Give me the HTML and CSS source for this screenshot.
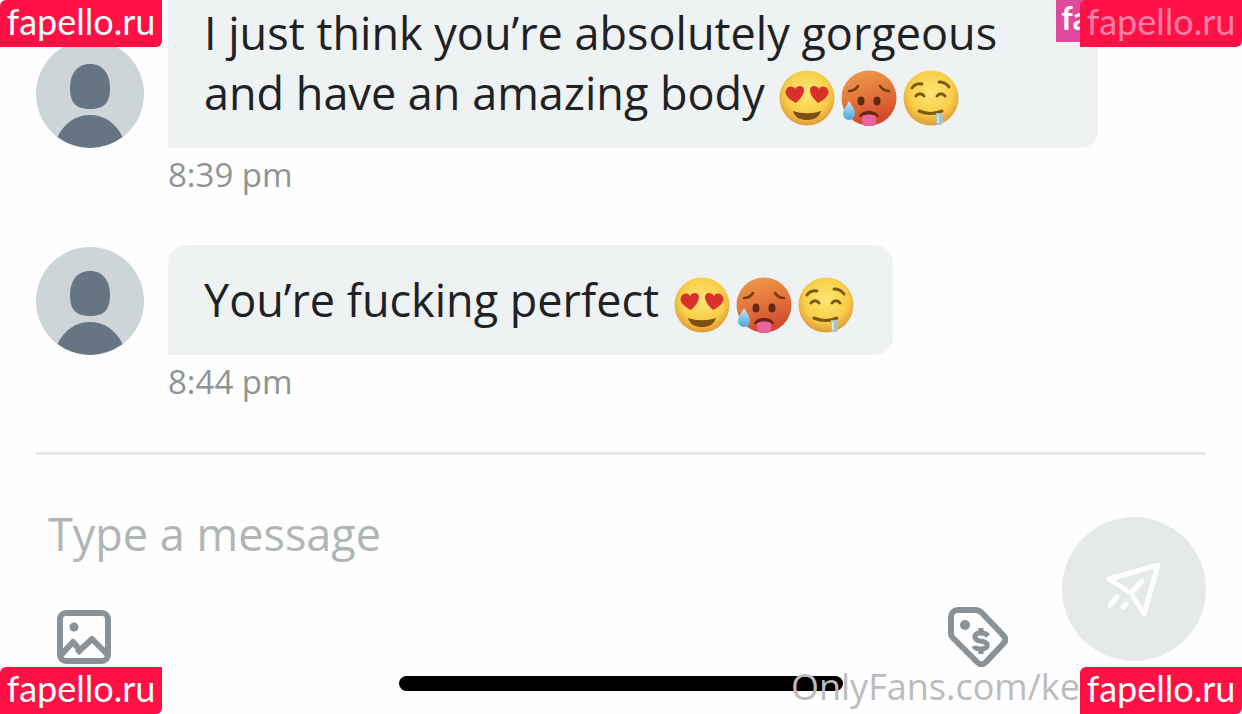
FILE: index.html
```html
<!DOCTYPE html>
<html lang="en">
<head>
  <meta charset="utf-8">
  <meta name="viewport" content="width=device-width, initial-scale=1">
  <title>Messages</title>
  <link rel="stylesheet" href="styles.css">
</head>
<body>

  <!-- Shared shapes -->
  <svg class="sprite" aria-hidden="true">
    <defs>
      <radialGradient id="yellow" cx="50%" cy="40%" r="60%">
        <stop offset="0" stop-color="#fde672"/>
        <stop offset=".65" stop-color="#f9cf4a"/>
        <stop offset="1" stop-color="#e09a35"/>
      </radialGradient>
      <linearGradient id="hot" x1="0" y1="0" x2=".3" y2="1">
        <stop offset="0" stop-color="#f0a04a"/>
        <stop offset=".5" stop-color="#e5793c"/>
        <stop offset="1" stop-color="#d24a2c"/>
      </linearGradient>
      <linearGradient id="drop" x1="0" y1="0" x2="0" y2="1">
        <stop offset="0" stop-color="#c4e8f8"/>
        <stop offset="1" stop-color="#4fa3da"/>
      </linearGradient>
    </defs>
    <symbol id="avatar" viewBox="0 0 108 108">
      <circle cx="54" cy="54" r="54" fill="#cdd5d9"/>
      <path d="M54 24c13 0 20 10 20 24 0 15-6 21-20 21s-20-6-20-21c0-14 7-24 20-24z" fill="#667584"/>
      <path d="M21.500 97C28 83 40 75 54 75s26 8 32.500 22A54 54 0 0 1 21.500 97z" fill="#667584"/>
    </symbol>
    <symbol id="heart-eyes" viewBox="0 0 56 56">
      <circle cx="28" cy="28" r="27.500" fill="url(#yellow)"/>
      <path d="M17 33C9 29 5 24 7 20c2-5 8-4 9-1 2-4 9-4 9 1 0 5-4 9-8 13z" fill="#d9302c"/>
      <path d="M39 33c8-4 12-9 10-13-2-5-8-4-9-1-2-4-9-4-9 1 0 5 4 9 8 13z" fill="#d9302c"/>
      <path d="M14 41c9 3 19 3 28 0-2 7-8 9-14 9s-12-2-14-9z" fill="#7d5012"/>
    </symbol>
    <symbol id="hot-face" viewBox="0 0 56 56">
      <circle cx="28" cy="28" r="27.500" fill="url(#hot)"/>
      <g fill="none" stroke="#7a3a14" stroke-width="2.500" stroke-linecap="round">
        <path d="M8 21c4 0 7-2 9-5M39 16c2 3 5 5 9 5"/>
      </g>
      <ellipse cx="20" cy="31" rx="3.500" ry="4.500" fill="#5e2a12"/>
      <ellipse cx="36" cy="31" rx="3.500" ry="4.500" fill="#5e2a12"/>
      <path d="M18 47c1-4 5-6 10-6s9 2 10 6z" fill="#6b2413"/>
      <path d="M21 46c4-2 10-2 14 0v5c0 4-3 6-7 6s-7-2-7-6z" fill="#e8649f"/>
      <path d="M8 31c4 6 6 9 6 13a6 6 0 0 1-12 0c0-4 3-7 6-13z" fill="url(#drop)"/>
    </symbol>
    <symbol id="drooling" viewBox="0 0 56 56">
      <circle cx="28" cy="28" r="27.500" fill="url(#yellow)"/>
      <g fill="none" stroke="#7d5a14" stroke-width="3" stroke-linecap="round">
        <path d="M9 18c2-3 6-5 10-4M36 12c4 0 8 2 10 5"/>
        <path d="M13 26c2-3 6-3 8 0M34 26c2-3 6-3 8 0"/>
        <path d="M16 41c7 3 16 3 23 0"/>
      </g>
      <path d="M33 43h6c1 3 1 6 1 9 0 4-7 4-7 0z" fill="#a9c3c4"/>
      <path d="M35 45v8" stroke="#e3f1f2" stroke-width="1.500"/>
    </symbol>
  </svg>

  <main class="thread">
    <article class="message">
      <svg class="avatar" role="img" aria-label="Fan"><use href="#avatar"/></svg>
      <p class="bubble">I just think you’re absolutely gorgeous and have an amazing body <span class="emojis"><svg class="emoji"><use href="#heart-eyes"/></svg><svg class="emoji"><use href="#hot-face"/></svg><svg class="emoji"><use href="#drooling"/></svg></span></p>
      <time class="time">8:39 pm</time>
    </article>
    <article class="message">
      <svg class="avatar" role="img" aria-label="Fan"><use href="#avatar"/></svg>
      <p class="bubble">You’re fucking perfect <span class="emojis"><svg class="emoji"><use href="#heart-eyes"/></svg><svg class="emoji"><use href="#hot-face"/></svg><svg class="emoji"><use href="#drooling"/></svg></span></p>
      <time class="time">8:44 pm</time>
    </article>
  </main>

  <form class="composer">
    <div class="compose-main">
      <input class="compose-input" type="text" placeholder="Type a message" aria-label="Type a message">
      <div class="tools">
        <button class="tool" type="button" aria-label="Add image">
          <svg width="54" height="54" viewBox="0 0 54 54" fill="none" stroke="#8a9297" stroke-width="6" stroke-linejoin="round">
            <rect x="3" y="3" width="48" height="48" rx="6"/>
            <path d="M4 45L16 32l6 7M20 43L35 29l16 16" stroke-width="6"/>
            <circle cx="17" cy="17" r="4.500" fill="#8a9297" stroke="none"/>
          </svg>
        </button>
        <button class="tool" type="button" aria-label="Set price">
          <svg width="60" height="60" viewBox="0 0 60 60" fill="none" stroke="#8a9297" stroke-linecap="round" stroke-linejoin="round">
            <path d="M10 3h17c3 0 5 1 7 3l21 22c3 3 3 6 0 9L38 55c-3 3-6 3-9 0L5 31c-1-1-2-2-2-4V10c0-4 3-7 7-7z" stroke-width="6"/>
            <circle cx="17" cy="18" r="5" fill="#8a9297" stroke="none"/>
            <path d="M40 29c-2-3-4-3-7-3-8 0-8 7-1 8 10 1 9 8 1 8-3 0-6 0-7-3" stroke-width="5" stroke-linecap="butt"/>
            <path d="M33 21v5M33 42v5" stroke-width="5" stroke-linecap="butt"/>
          </svg>
        </button>
      </div>
    </div>
    <button class="send" type="submit" aria-label="Send">
      <svg width="60" height="60" viewBox="0 0 60 60" fill="none" stroke="#fff" stroke-width="5" stroke-linecap="round" stroke-linejoin="round">
        <path d="M5 20L54 6 40 55 27 34z"/>
        <path d="M27 34L38 22M6 46l7-8M19 48l3-3"/>
      </svg>
    </button>
  </form>
  <div class="home-bar"></div>

  <!-- Corner marks -->
  <a class="mark top-left" href="#">fapello.ru</a>
  <div class="corner top-right">
    <span class="old-mark">fa</span>
    <a class="mark faded" href="#">fapello.ru</a>
  </div>
  <a class="mark bottom-left" href="#">fapello.ru</a>
  <div class="corner bottom-right">
    <span class="watermark">OnlyFans.com/ke</span>
    <a class="mark" href="#">fapello.ru</a>
  </div>

</body>
</html>
```
FILE: styles.css
```css
* { box-sizing: border-box; }
body {
  display: flex;
  flex-direction: column;
  height: 100vh;
  margin: 0;
  overflow: hidden;
  background: #fefefe;
  color: #1f2224;
  font-family: "Open Sans", "Noto Sans", sans-serif;
}
button { padding: 0; border: 0; background: none; }
svg { display: block; }
.sprite { position: absolute; width: 0; height: 0; }

/* Thread */
.thread {
  display: flex;
  flex: 1;
  flex-direction: column;
  justify-content: flex-end;
  min-height: 0;
  padding: 0 144px 0 36px;
}
.message {
  display: grid;
  grid-template-columns: 108px minmax(0, 1fr);
  column-gap: 24px;
  flex: none;
  margin-bottom: 47px;
}
.avatar { align-self: end; width: 108px; height: 108px; }
.bubble {
  justify-self: start;
  margin: 0;
  padding: 25px 36px;
  border-radius: 18px 18px 18px 0;
  background: #eff2f3;
  font-size: 45px;
  line-height: 60px;
}
.emojis { white-space: nowrap; }
.emoji {
  display: inline-block;
  width: 56px;
  height: 56px;
  margin: -8px 3px;
  vertical-align: -8px;
}
.time {
  grid-column: 2;
  margin-top: 4px;
  color: #8f9394;
  font-size: 33px;
  line-height: 46px;
}

/* Composer */
.composer {
  display: flex;
  align-items: flex-end;
  gap: 54px;
  margin: 0 36px;
  padding: 49px 0 9px;
  border-top: 3px solid #e6e7e8;
}
.compose-main { flex: 1; min-width: 0; }
.compose-input {
  display: block;
  width: 100%;
  height: 60px;
  padding: 0 12px;
  border: 0;
  outline: 0;
  background: none;
  font: 45px/60px "Open Sans", "Noto Sans", sans-serif;
}
.compose-input::placeholder { color: #b0b5b6; opacity: 1; }
.tools {
  display: flex;
  align-items: center;
  justify-content: space-between;
  margin-top: 43px;
  padding-left: 21px;
}
.send {
  display: flex;
  align-items: center;
  justify-content: center;
  width: 144px;
  height: 144px;
  margin-bottom: 6px;
  border-radius: 50%;
  background: #e5e9ea;
}
.home-bar {
  width: 444px;
  height: 15px;
  margin: 0 auto 23px;
  border-radius: 8px;
  background: #000;
}

/* Corner marks */
.mark {
  width: 162px;
  height: 47px;
  border-radius: 6px 0;
  background: #ff1045;
  color: #fff;
  font: 36px/42px Lato, sans-serif;
  text-align: center;
  text-decoration: none;
}
.faded { color: #ff7fa8; }
.corner { display: flex; }
.top-left, .top-right, .bottom-left, .bottom-right { position: absolute; }
.top-left { top: 0; left: 0; }
.top-right { top: 0; right: 0; }
.bottom-left { bottom: 0; left: 0; }
.bottom-right { right: 0; bottom: 0; }
.old-mark {
  height: 42px;
  padding-left: 5px;
  margin-right: -9px;
  background: #e0489e;
  color: #fff;
  font: bold 32px/36px Lato, sans-serif;
}
.top-right .mark { position: relative; }
.watermark {
  color: #bcbcbc;
  font-size: 36px;
  line-height: 39px;
}
```
